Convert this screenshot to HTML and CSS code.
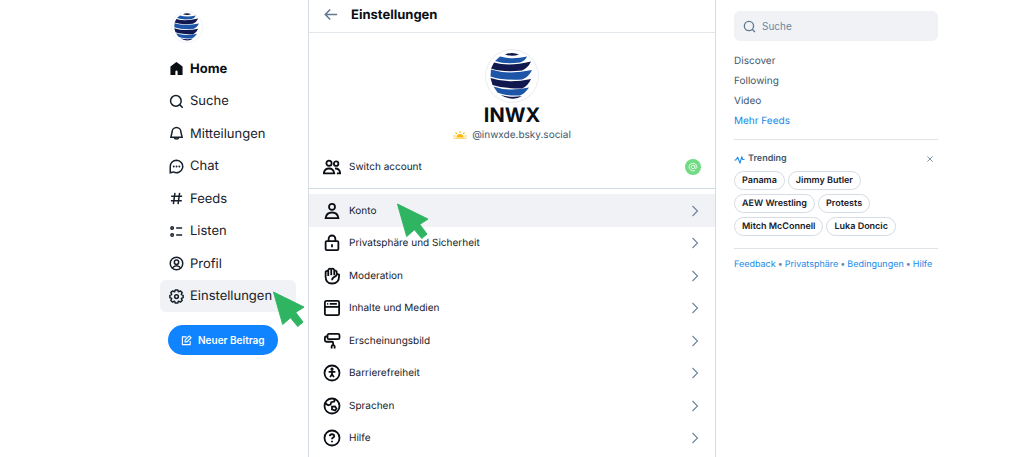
FILE: index.html
```html
<!DOCTYPE html>
<html lang="de">
<head>
<meta charset="utf-8">
<meta name="viewport" content="width=device-width, initial-scale=1">
<title>Einstellungen</title>
<link rel="stylesheet" href="styles.css">
</head>
<body>
<svg class="defs" aria-hidden="true">
  <defs>
    <symbol id="logo" viewBox="0 0 54 54">
      <circle cx="27" cy="27" r="26.400" fill="#fff" stroke="#e8edf1"/>
      <path d="M20 5.500Q27 2.500 34 5.500Q27 8 20 5.500Z" fill="#10184f"/>
      <path d="M15 7.500Q27 11 42 7.500Q40 12 35 13.500Q20 15.500 10 12Z" fill="#1d56a8"/>
      <path d="M9 13.500Q24 18 46 12.500Q43 19 37 21.500Q18 23.500 6 19.500Z" fill="#10184f"/>
      <path d="M6 20.500Q23 26 47 21Q44 28 37 30.500Q17 31.500 5.500 27.500Z" fill="#1d56a8"/>
      <path d="M5.500 29Q23 35 46 30Q43 37 37 39.500Q18 39.500 7.500 36Z" fill="#10184f"/>
      <path d="M8.500 37.500Q23 43 44 38.500Q40 44.500 35 46.500Q20 47 12.500 43.500Z" fill="#1d56a8"/>
      <path d="M15.500 46Q26 49 37 47Q28 53 15.500 46Z" fill="#10184f"/>
    </symbol>
    <symbol id="search" viewBox="0 0 24 24"><circle cx="11" cy="11" r="8.500"/><path d="m17 17 5 5"/></symbol>
    <symbol id="chevron" viewBox="0 0 24 24"><path d="m7 2 10 10L7 22"/></symbol>
    <symbol id="cursor" viewBox="0 0 34 38"><path d="M1.500 1 33 16.500 24.500 22 32 32 26.500 36.500 19 27.500 11 34.500Z" fill="#2fb562" stroke="#2fb562"/></symbol>
  </defs>
</svg>
<div class="app">
  <aside class="left">
    <nav class="nav" aria-label="Hauptnavigation">
      <svg class="avatar"><use href="#logo"/></svg>
      <ul class="nav-list">
        <li><a class="nav-link bold" href="#"><svg class="icon" viewBox="0 0 24 24"><path d="M12 3 3.500 9.500V21H9v-4a3 3 0 0 1 6 0v4h5.500V9.500Z" fill="currentColor"/></svg>Home</a></li>
        <li><a class="nav-link" href="#"><svg class="icon"><use href="#search"/></svg>Suche</a></li>
        <li><a class="nav-link" href="#"><svg class="icon" viewBox="0 0 24 24"><path d="M5 9.500a7 7 0 0 1 14 0l2 8.500H3ZM8 18a4.200 4.200 0 0 0 8 0"/></svg>Mitteilungen</a></li>
        <li><a class="nav-link" href="#"><svg class="icon" viewBox="0 0 24 24"><path d="M12 2A10 10 0 1 1 7 20.700L2 22V12A10 10 0 0 1 12 2Z"/><path d="M7.500 12h.1M12 12h.1M16.500 12h.1" stroke-linecap="round" stroke-width="3"/></svg>Chat</a></li>
        <li><a class="nav-link" href="#"><svg class="icon" viewBox="0 0 24 24"><path d="M9.500 3 7 21M17 3l-2.500 18M3.500 8.500H21M3 15.500h17.500"/></svg>Feeds</a></li>
        <li><a class="nav-link" href="#"><svg class="icon" viewBox="0 0 24 24"><circle cx="5" cy="6.500" r="2"/><circle cx="5" cy="17.500" r="2"/><path d="M11.500 6.500H21M11.500 17.500H21"/></svg>Listen</a></li>
        <li><a class="nav-link" href="#"><svg class="icon" viewBox="0 0 24 24"><circle cx="12" cy="12" r="10"/><circle cx="12" cy="10" r="3.500"/><path d="M5.500 19Q8 15.500 12 15.500T18.500 19"/></svg>Profil</a></li>
        <li><a class="nav-link active" href="#" aria-current="page"><svg class="icon" viewBox="0 0 24 24"><path d="M10 1.500h4l1 2.900 3.500-1.200 2.500 2.600-1.300 3.200 2.900 1.200v3.600l-2.900 1.200 1.300 3.300-2.500 2.500-3.500-1.300-1 3h-4l-1-3-3.500 1.300L3 18.300 4.300 15l-2.900-1.200v-3.600L4.300 9 3 5.800l2.500-2.600L9 4.400Z" stroke-linejoin="round"/><circle cx="12" cy="12" r="3"/></svg>Einstellungen<svg class="cursor"><use href="#cursor"/></svg></a></li>
      </ul>
      <button class="compose" type="button"><svg class="icon-s" viewBox="0 0 24 24"><path d="M12 4H3v17h17v-8M9 15v-4l9-9 4 4-9 9Z"/></svg>Neuer Beitrag</button>
    </nav>
  </aside>

  <main class="main">
    <header class="head">
      <a class="back" href="#" aria-label="Zurück"><svg class="icon" viewBox="0 0 24 24"><path d="M10 4 2 12l8 8M2 12h19"/></svg></a>
      <h1 class="title">Einstellungen</h1>
    </header>
    <section class="profile">
      <svg class="portrait"><use href="#logo"/></svg>
      <h2 class="name">INWX</h2>
      <p class="handle"><svg class="sun" viewBox="0 0 28 20"><path d="M7 15a7 7 0 0 1 14 0Z" fill="#ffb50a" stroke="none"/><path d="M14 2v4M5 5l3 3M23 5l-3 3M1 12h4M23 12h4" stroke="#ffc021"/><path d="M1 16.500h26" stroke="#ffd25c"/></svg>@inwxde.bsky.social</p>
    </section>
    <a class="row switch" href="#"><svg class="icon-l" viewBox="0 0 24 24"><circle cx="8" cy="7" r="3.500"/><circle cx="17.500" cy="7.500" r="3"/><path d="M1 20.500Q2 14 8 14T15 20.500ZM16 14Q22 13.500 23 20.500H18.500"/></svg><span class="label">Switch account</span><svg class="badge" viewBox="0 0 16 16"><circle cx="8" cy="8" r="8" fill="#70db83" stroke="none"/><g stroke="#e2fae6" stroke-width="1"><circle cx="8" cy="8" r="1.800"/><path d="M9.800 6.200v2.300q.2 1.300 1.400.9.800-.4.700-1.600A3.900 3.900 0 1 0 10 11.400"/></g></svg></a>
    <ul class="settings">
      <li><a class="row current" href="#"><svg class="icon-l" viewBox="0 0 24 24"><circle cx="12" cy="6.500" r="4"/><path d="M3.500 21.500Q4.500 14 12 14T20.500 21.500Z"/></svg><span class="label">Konto</span><svg class="chev"><use href="#chevron"/></svg><svg class="cursor konto"><use href="#cursor"/></svg></a></li>
      <li><a class="row" href="#"><svg class="icon-l" viewBox="0 0 24 24"><rect x="3.500" y="9.500" width="17" height="12" rx="1.500"/><path d="M7.500 9.500V6.500a4.500 4.500 0 0 1 9 0v3M12 13.500v4"/></svg><span class="label">Privatsphäre und Sicherheit</span><svg class="chev"><use href="#chevron"/></svg></a></li>
      <li><a class="row" href="#"><svg class="icon-l" viewBox="0 0 24 24"><path d="M3.500 13V6.500Q5.200 4 7 6V4q2-3 4-1 2-2 4 1v1.500q3-1.500 3.300 1V10q4-1 3.200 1.500C21.500 18 18 22 12 22S3.500 18 3.500 13ZM7 6v6M11 3.500V11M15 4.500V11M18.500 10q-1 3-4 3.500-2.500 1.500-2.500 4"/></svg><span class="label">Moderation</span><svg class="chev"><use href="#chevron"/></svg></a></li>
      <li><a class="row" href="#"><svg class="icon-l" viewBox="0 0 24 24"><rect x="2.500" y="2.500" width="19" height="19" rx="2"/><path d="M2.500 10.500h19M5.500 6.500h1.500M9 6.500h9.500"/></svg><span class="label">Inhalte und Medien</span><svg class="chev"><use href="#chevron"/></svg></a></li>
      <li><a class="row" href="#"><svg class="icon-l" viewBox="0 0 24 24"><rect x="6" y="2.500" width="16" height="7" rx="2"/><path d="M6 6H4Q2.500 6 2.500 7.500V11q0 2 2 2H12q1.500 0 1.500 1.500V17M11.500 22v-3q0-1.500 2-1.500t2 1.500v3"/></svg><span class="label">Erscheinungsbild</span><svg class="chev"><use href="#chevron"/></svg></a></li>
      <li><a class="row" href="#"><svg class="icon-l" viewBox="0 0 24 24"><circle cx="12" cy="12" r="10"/><circle cx="12" cy="7" r="1" fill="currentColor"/><path d="M7.500 10.500h9M12 10.500v3L9.500 17.500M12 13.500l2.500 4"/></svg><span class="label">Barrierefreiheit</span><svg class="chev"><use href="#chevron"/></svg></a></li>
      <li><a class="row" href="#"><svg class="icon-l" viewBox="0 0 24 24"><circle cx="12" cy="12" r="10"/><path d="M3 8.500 7 11l3-1 1-3 4-1 .5-3.500M12 13l4-.5 2 3-2 2.500-4-1.500Z"/></svg><span class="label">Sprachen</span><svg class="chev"><use href="#chevron"/></svg></a></li>
      <li><a class="row" href="#"><svg class="icon-l" viewBox="0 0 24 24"><circle cx="12" cy="12" r="10"/><path d="M9 9.500q.3-2.500 3-2.500t3 2.300q0 1.400-1.700 2.200Q12 12 12 13.500M12 15.500v2"/></svg><span class="label">Hilfe</span><svg class="chev"><use href="#chevron"/></svg></a></li>
    </ul>
  </main>

  <aside class="right">
    <label class="search"><svg class="icon-m"><use href="#search"/></svg><input type="search" placeholder="Suche" aria-label="Suche"></label>
    <ul class="feeds">
      <li><a href="#">Discover</a></li>
      <li><a href="#">Following</a></li>
      <li><a href="#">Video</a></li>
      <li><a class="blue" href="#">Mehr Feeds</a></li>
    </ul>
    <section class="trending">
      <div class="trend-head">
        <svg class="icon-s blue" viewBox="0 0 24 24"><path d="M1 13h3l4-6 5 13 4-14 2 6h4" stroke-linejoin="round"/></svg>
        <h2 class="trend-title">Trending</h2>
        <button class="close" type="button" aria-label="Schließen"><svg class="icon-x" viewBox="0 0 24 24"><path d="m4 4 16 16M20 4 4 20"/></svg></button>
      </div>
      <div class="chips">
        <a class="chip" href="#">Panama</a><a class="chip" href="#">Jimmy Butler</a>
        <a class="chip" href="#">AEW Wrestling</a><a class="chip" href="#">Protests</a>
        <a class="chip" href="#">Mitch McConnell</a><a class="chip" href="#">Luka Doncic</a>
      </div>
    </section>
    <footer class="foot"><a href="#">Feedback</a><span>•</span><a href="#">Privatsphäre</a><span>•</span><a href="#">Bedingungen</a><span>•</span><a href="#">Hilfe</a></footer>
  </aside>
</div>
</body>
</html>
```
FILE: styles.css
```css
* { box-sizing: border-box; }

body {
  margin: 0;
  background: #fff;
  color: #17202b;
  font-family: Inter, "Liberation Sans", sans-serif;
  font-size: 10px;
  line-height: 16px;
  text-rendering: geometricPrecision;
}

ul { list-style: none; margin: 0; padding: 0; }
h1, h2, p { margin: 0; }
a { color: inherit; text-decoration: none; }
button { border: 0; font: inherit; cursor: pointer; }

svg {
  display: block;
  flex: none;
  fill: none;
  stroke: currentColor;
  stroke-width: 2.4;
}

.defs { position: absolute; width: 0; height: 0; }

.app {
  display: grid;
  grid-template-columns: minmax(160px, 1fr) minmax(0, 408px) minmax(224px, 1fr);
  min-height: 100vh;
}

/* Left navigation */
.left { display: flex; justify-content: flex-end; }
.nav { width: 148px; padding: 11px 12px 0 0; }
.avatar { width: 32px; height: 32px; margin: 0 0 9px 11px; stroke: none; stroke-width: 1; }

.nav-list, .settings { display: grid; grid-auto-rows: 1fr; min-height: 260px; }

.nav-link {
  position: relative;
  display: flex;
  align-items: center;
  gap: 6px;
  height: 100%;
  padding: 1px 0 0 9px;
  border-radius: 6px;
  font-size: 13px;
}
.bold { font-weight: 700; color: #0b0f14; }
.active { background: #f0f2f5; }

.icon { width: 15px; height: 15px; }
.icon-m { width: 13px; height: 13px; }
.icon-s { width: 11px; height: 11px; }
.icon-x { width: 8px; height: 8px; }
.icon-l { width: 18px; height: 18px; color: #0b0f14; }

.cursor { position: absolute; left: 112px; top: 11px; width: 33px; height: 37px; z-index: 1; stroke-width: 1; }
.konto { left: 87px; top: 9px; }

.compose {
  display: flex;
  align-items: center;
  gap: 6px;
  height: 30px;
  margin: 13px 0 0 8px;
  padding: 0 13px;
  border-radius: 15px;
  background: #1083fe;
  color: #fff;
  font-weight: 600;
}

/* Settings column */
.main { border: solid #d5dce3; border-width: 0 1px; }

.head {
  display: flex;
  align-items: center;
  gap: 12px;
  height: 33px;
  padding: 0 15px 3px;
  border-bottom: 1px solid #e3e8ec;
}
.back { color: #5f7890; }
.title { font-size: 13px; line-height: 16px; font-weight: 700; color: #0b0f14; }

.profile {
  display: flex;
  flex-direction: column;
  align-items: center;
  padding-top: 16px;
}
.portrait { width: 54px; height: 54px; stroke: none; stroke-width: 1; }
.name { font-size: 20px; line-height: 24px; font-weight: 700; color: #0b0f14; }
.handle { display: flex; align-items: center; gap: 5px; color: #42576c; }
.sun { width: 14px; height: 10px; }

.row {
  position: relative;
  display: flex;
  align-items: center;
  gap: 8px;
  height: 100%;
  padding: 1px 14px 0;
}
.label { flex: 1; }
.switch { height: 46px; padding-top: 2px; border-bottom: 1px solid #d0dde3; margin-bottom: 5px; }
.badge { width: 16px; height: 16px; }
.chev { width: 12px; height: 12px; color: #6f879f; }
.current { background: #f0f2f5; }

/* Right column */
.right { width: 222px; padding: 11px 0 0 18px; color: #42576c; }

.search {
  display: flex;
  align-items: center;
  gap: 6px;
  height: 30px;
  padding: 0 9px;
  border-radius: 6px;
  background: #f0f2f5;
  color: #5f7890;
}
.search input {
  flex: 1;
  min-width: 0;
  padding: 0;
  border: 0;
  outline: 0;
  background: none;
  color: inherit;
  font: inherit;
}
.search input::placeholder { color: #6f869f; opacity: 1; }

.feeds { display: grid; gap: 4px; padding: 12px 0 10px; }
.blue, .foot a { color: #2088e8; }

.trending { padding: 11px 0 12px; border: solid #dfe4e9; border-width: 1px 0; }
.trend-head { display: flex; align-items: center; gap: 3px; padding-right: 4px; }
.trend-title { flex: 1; font-size: 9px; line-height: 16px; font-weight: 600; }
.close { padding: 0; background: none; color: #5f7890; }

.chips { display: flex; flex-wrap: wrap; gap: 4px 3px; max-width: 180px; padding-top: 4px; }
.chip {
  padding: 0 7px;
  border: 1px solid #d5dce3;
  border-radius: 10px;
  color: #17202b;
  font-size: 9px;
  font-weight: 600;
  line-height: 17px;
}

.foot { display: flex; gap: 2px; padding-top: 8px; font-size: 9px; }
.foot span { color: #6f869f; }
```
